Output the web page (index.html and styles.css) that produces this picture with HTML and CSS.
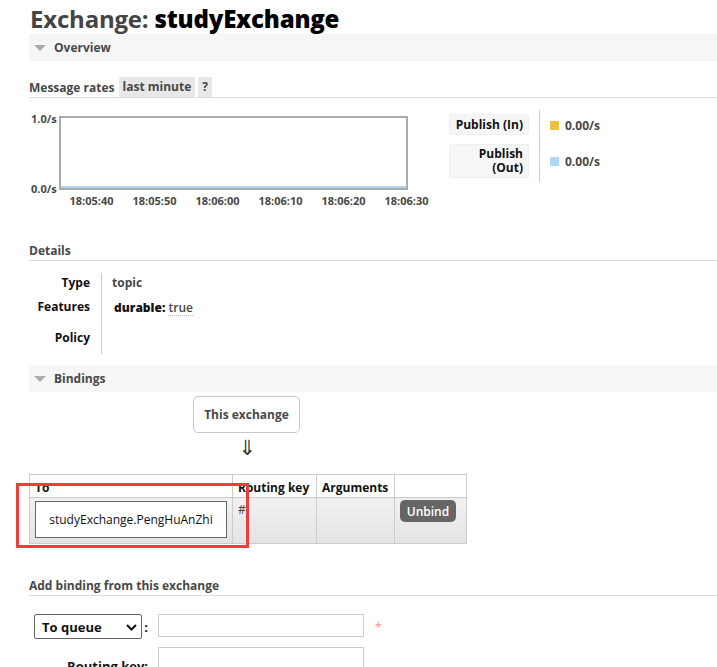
FILE: index.html
```html
<!DOCTYPE html>
<html>
<head>
<meta charset="utf-8">
<title>Exchange: studyExchange</title>
<link rel="stylesheet" href="styles.css">
</head>
<body>
<div class="page">
  <h1 class="title"><span class="muted">Exchange:</span> <b>studyExchange</b></h1>

  <section class="section">
    <h2 class="bar"><span class="tri"></span>Overview</h2>
    <div class="panel">
      <div class="rates-head">
        <span class="rates-title">Message rates</span>
        <span class="pill">last minute</span>
        <span class="pill q">?</span>
      </div>
      <div class="rates">
        <div class="chart-wrap">
          <div class="chart-row">
            <div class="yaxis"><span>1.0/s</span><span>0.0/s</span></div>
            <div class="chart"><div class="line"></div></div>
          </div>
          <div class="xaxis">
            <span>18:05:40</span><span>18:05:50</span><span>18:06:00</span><span>18:06:10</span><span>18:06:20</span><span>18:06:30</span>
          </div>
        </div>
        <div class="legend">
          <div class="legend-labels">
            <div class="lbl">Publish (In)</div>
            <div class="lbl tall"><span>Publish</span><span>(Out)</span></div>
          </div>
          <div class="legend-vals">
            <div class="val"><span class="sw yellow"></span>0.00/s</div>
            <div class="val v2"><span class="sw blue"></span>0.00/s</div>
          </div>
        </div>
      </div>

      <h3 class="sub details">Details</h3>
      <table class="facts">
        <tr class="r1"><th>Type</th><td>topic</td></tr>
        <tr class="r2"><th>Features</th><td><b class="key">durable:</b> <span class="abbr">true</span></td></tr>
        <tr class="r3"><th>Policy</th><td></td></tr>
      </table>
    </div>
  </section>

  <section class="section">
    <h2 class="bar"><span class="tri"></span>Bindings</h2>
    <div class="bindings">
      <div class="this-ex">This exchange</div>
      <div class="arrow">&#8659;</div>
      <div class="table-wrap">
        <table class="list">
          <colgroup>
            <col class="w1"><col class="w2"><col class="w3"><col class="w4">
          </colgroup>
          <thead>
            <tr><th>To</th><th>Routing key</th><th>Arguments</th><th></th></tr>
          </thead>
          <tbody>
            <tr>
              <td class="c1"><span class="dest">studyExchange.PengHuAnZhi</span></td>
              <td class="c2">#</td>
              <td class="c3"></td>
              <td class="c4"><button class="unbind">Unbind</button></td>
            </tr>
          </tbody>
        </table>
        <div class="highlight"></div>
      </div>
    </div>

    <h3 class="sub add">Add binding from this exchange</h3>
    <div class="form">
      <div class="frow">
        <div class="flabel"><span class="select">To queue<svg class="chev" width="11" height="7" viewBox="0 0 11 7"><path d="M1 1 L5.5 5.5 L10 1" fill="none" stroke="#111" stroke-width="2"/></svg></span>:</div>
        <div class="input"></div>
        <span class="req">*</span>
      </div>
      <div class="frow r-key">
        <div class="flabel">Routing key:</div>
        <div class="input"></div>
      </div>
    </div>
  </section>
</div>
</body>
</html>
```

FILE: styles.css
```css
html, body {
  margin: 0;
  padding: 0;
  background: #fff;
}
body {
  font-family: "Open Sans", "Noto Sans", "DejaVu Sans", sans-serif;
  font-size: 12px;
  color: #484848;
  overflow: hidden;
  width: 717px;
  height: 667px;
}
.page {
  padding-left: 29px;
}
.title {
  margin: 0;
  padding: 4px 0 0 1px;
  height: 30px;
  line-height: 30px;
  font-size: 24px;
  font-weight: 700;
  letter-spacing: -0.2px;
  white-space: nowrap;
}
.title .muted { color: #444; }
.title b { color: #000; }

.bar {
  margin: 0;
  height: 27px;
  line-height: 27px;
  background: #f6f6f6;
  font-size: 12px;
  font-weight: 700;
  color: #484848;
  display: flex;
  align-items: center;
}
.tri {
  display: inline-block;
  width: 0;
  height: 0;
  border-left: 6px solid transparent;
  border-right: 6px solid transparent;
  border-top: 6px solid #aaa;
  margin: 0 8px 0 5px;
}

.panel {
  padding-top: 16px;
}
.rates-head {
  display: flex;
  align-items: center;
  height: 20px;
  border-bottom: 1px solid #ddd;
  font-weight: 700;
  color: #484848;
}
.rates-title { margin-right: 4px; }
.pill {
  background: #e8e8e8;
  height: 20px;
  line-height: 20px;
  padding: 0 4px;
  margin-right: 3px;
}

.rates {
  display: flex;
  padding-top: 12px;
  height: 118px;
}
.chart-wrap {
  width: 420px;
}
.chart-row {
  display: flex;
  padding-top: 6px;
}
.yaxis {
  width: 30px;
  height: 83px;
  display: flex;
  flex-direction: column;
  justify-content: space-between;
  font-size: 11px;
  font-weight: 700;
  color: #484848;
  line-height: 13px;
  margin-top: -4px;
  margin-bottom: -5px;
  padding-left: 2px;
  box-sizing: border-box;
}
.chart {
  width: 349px;
  height: 74px;
  border: 2px solid #aaa;
  box-sizing: border-box;
  display: flex;
  align-items: flex-end;
}
.line {
  width: 100%;
  height: 2px;
  background: #b0d4f0;
}
.xaxis {
  display: flex;
  margin-left: 31px;
  margin-top: 3px;
  font-size: 11px;
  font-weight: 700;
  color: #484848;
}
.xaxis span {
  width: 63px;
  text-align: center;
}

.legend {
  display: flex;
}
.legend-labels {
  width: 80px;
  padding-top: 4px;
}
.lbl {
  background: #f6f6f6;
  border: 1px solid #f0f0f0;
  border-radius: 2px;
  text-align: right;
  font-weight: 700;
  color: #111;
  padding: 0 5px;
  box-sizing: border-box;
}
.lbl:first-child {
  height: 21px;
  line-height: 19px;
}
.lbl.tall {
  margin-top: 9px;
  height: 34px;
  padding-top: 2px;
  display: flex;
  flex-direction: column;
  align-items: flex-end;
  line-height: 14px;
}
.legend-vals {
  border-left: 1px solid #ccc;
  margin-left: 10px;
  height: 72px;
  padding-left: 10px;
}
.val {
  display: flex;
  align-items: center;
  height: 13px;
  margin-top: 9px;
  font-weight: 700;
  color: #484848;
}
.val.v2 { margin-top: 23px; }
.sw {
  display: inline-block;
  width: 9px;
  height: 9px;
  margin-right: 6px;
}
.sw.yellow { background: #edc240; }
.sw.blue { background: #afd8f8; }

.sub {
  margin: 0;
  font-size: 12px;
  font-weight: 700;
  color: #484848;
  height: 18px;
  line-height: 17px;
  border-bottom: 1px solid #ddd;
}
.sub.details {
  margin-top: 14px;
}
.facts {
  border-collapse: collapse;
  margin-top: 12px;
  margin-bottom: 11px;
}
.facts th {
  width: 61px;
  text-align: right;
  font-weight: 700;
  color: #111;
  padding: 0 11px 0 0;
  border-right: 1px solid #ccc;
  vertical-align: top;
}
.facts td {
  padding: 0 0 0 10px;
  vertical-align: top;
  font-weight: 700;
  color: #484848;
}
.facts .r1 th, .facts .r1 td { height: 24px; padding-top: 1px; }
.facts .r2 th, .facts .r2 td { height: 31px; }
.facts .r3 th, .facts .r3 td { height: 25px; }
.key { color: #111; margin-left: 2px; }
.abbr {
  color: #484848;
  font-weight: 600;
  border-bottom: 1px dotted #bbb;
  display: inline-block;
  line-height: 14px;
  padding-top: 3px;
}

.bindings {
  padding-top: 4px;
}
.this-ex {
  margin-left: 164px;
  width: 107px;
  height: 37px;
  box-sizing: border-box;
  border: 1px solid #c8c8c8;
  border-radius: 5px;
  text-align: center;
  line-height: 35px;
  font-weight: 700;
  color: #484848;
}
.arrow {
  margin-left: 208px;
  width: 20px;
  text-align: center;
  font-size: 21px;
  line-height: 30px;
  height: 41px;
  color: #333;
  font-family: "DejaVu Sans", sans-serif;
}
.table-wrap {
  position: relative;
  width: 437px;
}
.list {
  border-collapse: collapse;
  table-layout: fixed;
  width: 437px;
}
.list col.w1 { width: 203px; }
.list col.w2 { width: 84px; }
.list col.w3 { width: 78px; }
.list col.w4 { width: 72px; }
.list th, .list td {
  border: 1px solid #ccc;
  padding: 0;
}
.list th {
  height: 23px;
  text-align: left;
  vertical-align: middle;
  font-weight: 700;
  color: #111;
  background: #fff;
  padding: 2px 5px 0 5px;
  box-sizing: border-box;
  white-space: nowrap;
}
.list tbody tr {
  height: 46px;
}
.list td {
  vertical-align: top;
  background: linear-gradient(#f2f2f2, #e3e3e3);
}
.list td.c1 { padding: 3px 5px 5px 5px; }
.list td.c2 { padding: 3px 5px 0 5px; color: #444; }
.dest {
  display: block;
  height: 37px;
  box-sizing: border-box;
  border: 1px solid #666;
  background: #fff;
  text-align: center;
  line-height: 35px;
  font-weight: 400;
  color: #111;
}
.list td.c4 { padding: 2px 0 0 5px; }
.unbind {
  font-family: inherit;
  font-size: 12px;
  font-weight: 600;
  color: #fff;
  background: #666;
  border: 0;
  border-radius: 5px;
  height: 22px;
  width: 56px;
  padding: 0;
}
.highlight {
  position: absolute;
  left: -13px;
  top: 9px;
  width: 233px;
  height: 65px;
  box-sizing: border-box;
  border: 3px solid #f03c3c;
}

.sub.add {
  margin-top: 33px;
}
.form {
  padding-top: 18px;
  padding-left: 5px;
}
.frow {
  display: flex;
  align-items: flex-start;
  margin-bottom: 8px;
}
.flabel {
  width: 114px;
  text-align: right;
  font-weight: 700;
  color: #111;
  font-size: 13px;
  display: flex;
  align-items: center;
  justify-content: flex-end;
  height: 25px;
  margin-right: 10px;
}
.r-key .flabel {
  height: 28px;
  align-items: flex-end;
}
.select {
  display: flex;
  align-items: center;
  justify-content: space-between;
  width: 109px;
  height: 25px;
  box-sizing: border-box;
  border: 1px solid #666;
  border-radius: 2px;
  padding: 0 4px 0 7px;
  margin-right: 2px;
  font-size: 13px;
  color: #111;
}
.chev { margin-top: 1px; }
.input {
  width: 206px;
  height: 23px;
  box-sizing: border-box;
  border: 1px solid #ccc;
  background: #fff;
}
.req {
  color: #f88;
  margin-left: 11px;
  margin-top: 5px;
  font-size: 12px;
}
```
